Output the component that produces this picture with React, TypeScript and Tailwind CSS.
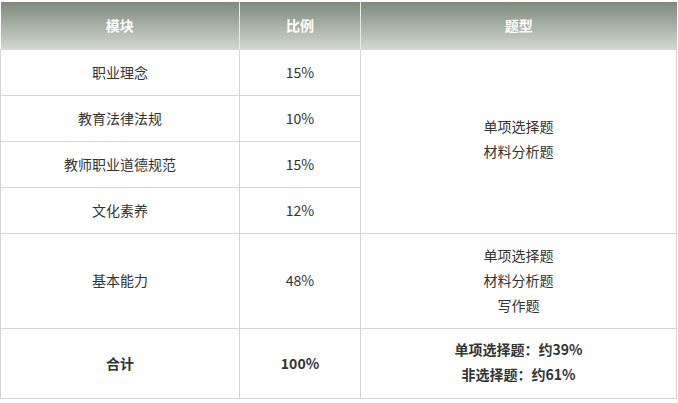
import React from 'react'

const rows = [
  { name: '职业理念', pct: '15%' },
  { name: '教育法律法规', pct: '10%' },
  { name: '教师职业道德规范', pct: '15%' },
  { name: '文化素养', pct: '12%' },
]

const td = 'border border-[#d4d4d4] text-center align-middle p-0'

const App = () => {
  return (
    <div
      className="w-[678px] h-[403px] bg-white pt-[2px] text-[14px] text-[#333]"
      style={{ fontFamily: '"Microsoft YaHei", "Noto Sans CJK SC", sans-serif' }}
    >
      <table className="w-[677px] border-collapse table-fixed">
        <colgroup>
          <col className="w-[239px]" />
          <col className="w-[121px]" />
          <col />
        </colgroup>
        <thead>
          <tr className="h-[47px] bg-gradient-to-b from-[#7e8a7c] to-[#d3d8d0] text-white font-bold">
            <th className="border-r border-[#e8ebe6] text-center">模块</th>
            <th className="border-r border-[#e8ebe6] text-center">比例</th>
            <th className="text-center">题型</th>
          </tr>
        </thead>
        <tbody>
          {rows.map((r, i) => (
            <tr key={r.name} className="h-[46px]">
              <td className={td}>{r.name}</td>
              <td className={td}>{r.pct}</td>
              {i === 0 && (
                <td className={td} rowSpan={4}>
                  <div className="flex flex-col items-center leading-[25px] pb-[4px]">
                    <span>单项选择题</span>
                    <span>材料分析题</span>
                  </div>
                </td>
              )}
            </tr>
          ))}
          <tr className="h-[95px]">
            <td className={td}>基本能力</td>
            <td className={td}>48%</td>
            <td className={td}>
              <div className="flex flex-col items-center leading-[25px] pb-[1px]">
                <span>单项选择题</span>
                <span>材料分析题</span>
                <span>写作题</span>
              </div>
            </td>
          </tr>
          <tr className="h-[70px] font-bold">
            <td className={td}>合计</td>
            <td className={td}>100%</td>
            <td className={td}>
              <div className="flex flex-col items-center leading-[25px] pb-[2px]">
                <span>单项选择题：约39%</span>
                <span>非选择题：约61%</span>
              </div>
            </td>
          </tr>
        </tbody>
      </table>
    </div>
  )
}

export default App
